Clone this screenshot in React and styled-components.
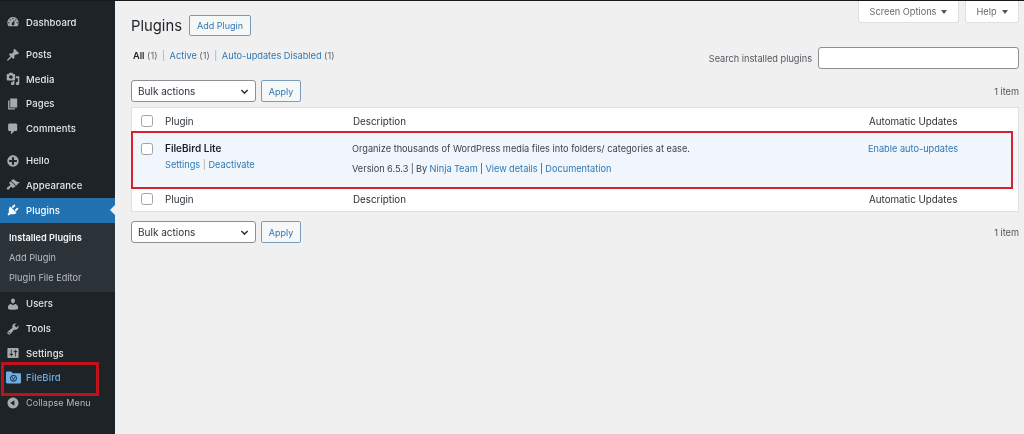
import React from "react";
import styled, { createGlobalStyle } from "styled-components";

const Global = createGlobalStyle`
  html, body { margin: 0; padding: 0; height: 100%; background: #f0f0f1; overflow: hidden; }
  body { font-family: Inter, "Liberation Sans", sans-serif; font-size: 9.5px; color: #3c434a; }
  * { box-sizing: border-box; }
`;

const Page = styled.div`
  position: relative; width: 1024px; height: 434px; display: flex; overflow: hidden;
  border-top: 1px solid #16181a; filter: blur(0.4px);
`;
const Sidebar = styled.nav`
  width: 115px; flex: none; background: #1d2327; padding-top: 9px;
  display: flex; flex-direction: column;
`;
const Item = styled.div`
  position: relative; height: 24.7px; margin-bottom: ${p => p.$mb || 0}px;
  display: flex; align-items: center; gap: 6px; padding-left: 6px;
  background: ${p => (p.$active ? "#2271b1" : "transparent")};
  color: ${p => (p.$active ? "#fff" : p.$color || "#e4e6e7")};
  font-size: ${p => p.$fs || 9.5}px; font-weight: ${p => p.$fw || 500}; letter-spacing: 0.1px;
  svg { width: 14px; height: 14px; flex: none; fill: ${p => (p.$active ? "#fff" : "#a7aaad")}; }
`;
const Notch = styled.span`
  position: absolute; right: 0; top: 50%; margin-top: -5px;
  border: 5px solid transparent; border-right-color: #f0f0f1; border-left-width: 0;
`;
const Submenu = styled.div`
  height: 69px; background: #2c3338; padding: 4.5px 0 0 9px;
  display: flex; flex-direction: column;
`;
const SubItem = styled.div`
  height: 20.2px; display: flex; align-items: center; font-size: 9.2px;
  color: ${p => (p.$current ? "#f3f4f5" : "#b9bec3")};
  font-weight: ${p => (p.$current ? 600 : 400)};
`;
const Main = styled.main`
  flex: 1; min-width: 0; padding: 0 5px 0 16px; display: flex; flex-direction: column;
`;
const ScreenTabs = styled.div`
  display: flex; justify-content: flex-end; gap: 6px; height: 22px;
`;
const ScreenTab = styled.div`
  width: ${p => p.$w}px; height: 22px; background: #fff;
  border: 1px solid #dfdfe0; border-top: none; border-radius: 0 0 3px 3px;
  display: flex; align-items: center; justify-content: center; gap: 5px;
  font-size: 9.2px; color: #646970;
`;
const Caret = styled.span`
  border: 3px solid transparent; border-top: 4px solid #50575e; border-bottom: none;
`;
const TitleRow = styled.div`
  display: flex; align-items: center; gap: 7px; margin-top: -9px; height: 23px;
`;
const Title = styled.h1`
  margin: 0; font-size: 14.8px; font-weight: 400; color: #1d2327;
`;
const OutlineButton = styled.div`
  width: ${p => p.$w}px; height: ${p => p.$h}px; background: #f6f7f7;
  border: 1px solid #7a9dbd; border-radius: 2px; color: #2f78b3; font-size: 9px;
  display: flex; align-items: center; justify-content: center;
`;
const FilterRow = styled.div`
  display: flex; justify-content: space-between; align-items: flex-start; height: 41px; margin-top: 2px;
`;
const Views = styled.div`
  margin-top: 11px; padding-left: 2px; font-size: 9.2px; color: #646970; display: flex; gap: 4.5px;
  b { font-weight: 600; color: #1d2327; }
  a { color: #2f78b3; }
  i { font-style: normal; color: #a7aaad; }
`;
const SearchBox = styled.div`
  display: flex; align-items: center; gap: 6px; margin-top: 8px; color: #50575e; font-size: 9.2px;
`;
const SearchInput = styled.div`
  width: 201px; height: 22px; background: #fff; border: 1px solid #8c8f94; border-radius: 3px;
`;
const NavRow = styled.div`
  display: flex; align-items: center; gap: 5px; height: 22px; margin-top: ${p => p.$mt || 0}px;
`;
const Select = styled.div`
  width: 125px; height: 22px; background: #fff; border: 1px solid #8c8f94; border-radius: 3px;
  display: flex; align-items: center; justify-content: space-between; padding: 0 6px;
  color: #2c3338; font-size: 10px;
  svg { width: 9px; height: 9px; stroke: #2c3338; stroke-width: 1.6; fill: none; }
`;
const Count = styled.span`
  margin-left: auto; font-size: 9.2px; color: #50575e;
`;
const Table = styled.div`
  margin-top: 5px; background: #fff; border: 1px solid #dfe0e2; height: 105px;
  display: flex; flex-direction: column;
`;
const Row = styled.div`
  display: grid; grid-template-columns: 33px 188px 516px 1fr; height: ${p => p.$h}px;
  padding-top: ${p => p.$pt || 0}px;
  align-items: ${p => (p.$body ? "start" : "center")};
  background: ${p => (p.$body ? "#f0f6fc" : "#fff")};
  font-size: 9.8px; color: #2c3338;
`;
const CheckCell = styled.div`
  display: flex; justify-content: center; padding-top: ${p => p.$pt || 0}px;
  padding-right: 3px;
`;
const Check = styled.span`
  width: 12px; height: 12px; background: #fff; border: 1px solid #a0a3a7; border-radius: 2.5px;
`;
const Name = styled.div`
  font-weight: 600; color: #1d2327; font-size: 10px; margin-top: 11px;
`;
const Actions = styled.div`
  margin-top: 5px; font-size: 9.2px; color: #a7aaad; a { color: #2f78b3; }
`;
const Desc = styled.div`
  margin: ${p => p.$mt}px 0 0 -1px; font-size: 9.2px; color: #3c434a; white-space: nowrap;
  word-spacing: ${p => p.$ws || 0}px;
  a { color: #2f78b3; }
`;
const Highlight = styled.div`
  position: absolute; left: ${p => p.$x}px; top: ${p => p.$y}px; width: ${p => p.$w}px; height: ${p => p.$h}px;
  border: ${p => p.$b}px solid ${p => p.$c}; pointer-events: none;
`;
const FolderSvg = styled.svg`
  && { width: 15px; height: 13px; margin: 0 -0.5px; fill: #72aee6; }
`;

const I = ({ d }) => <svg viewBox="0 0 20 20"><path d={d} /></svg>;
const icons = {
  dashboard: "M3.76 16h12.48c1.1-1.37 1.76-3.11 1.76-5 0-4.42-3.58-8-8-8s-8 3.58-8 8c0 1.89.66 3.63 1.76 5zM10 4c.55 0 1 .45 1 1s-.45 1-1 1-1-.45-1-1 .45-1 1-1zM6 6c.55 0 1 .45 1 1s-.45 1-1 1-1-.45-1-1 .45-1 1-1zm8 0c.55 0 1 .45 1 1s-.45 1-1 1-1-.45-1-1 .45-1 1-1zm-5.37 5.55L12 7v6c0 1.1-.9 2-2 2s-2-.9-2-2c0-.57.24-1.08.63-1.45zM4 10c.55 0 1 .45 1 1s-.45 1-1 1-1-.45-1-1 .45-1 1-1zm12 0c.55 0 1 .45 1 1s-.45 1-1 1-1-.45-1-1 .45-1 1-1z",
  posts: "M10.44 3.02l1.82-1.82 6.36 6.35-1.83 1.82c-1.05-.68-2.48-.57-3.41.36l-.75.75c-.92.93-1.04 2.35-.35 3.41l-1.83 1.82-2.41-2.41-2.8 2.79c-.42.42-3.38 2.71-3.8 2.29s1.86-3.39 2.28-3.81l2.79-2.79L4.1 9.36l1.83-1.82c1.05.69 2.48.57 3.4-.36l.75-.75c.93-.92 1.05-2.35.36-3.41z",
  media: "M13 11V4c0-.55-.45-1-1-1h-1.67L9 1H5L3.67 3H2c-.55 0-1 .45-1 1v7c0 .55.45 1 1 1h10c.55 0 1-.45 1-1zM7 4.5c1.38 0 2.5 1.12 2.5 2.5S8.38 9.5 7 9.5 4.5 8.38 4.5 7 5.62 4.5 7 4.5zM14 6h5v10.5c0 1.38-1.12 2.5-2.5 2.5S14 17.88 14 16.5s1.12-2.5 2.5-2.5c.17 0 .34.02.5.05V9h-3V6zm-4 8.05V13h2v3.5c0 1.38-1.12 2.5-2.5 2.5S7 17.88 7 16.5 8.12 14 9.5 14c.17 0 .34.02.5.05z",
  pages: "M6 15V2h10v13H6zm-1 1h8v2H3V5h2v11z",
  comments: "M5 2h9c1.1 0 2 .9 2 2v7c0 1.1-.9 2-2 2h-2l-5 5v-5H5c-1.1 0-2-.9-2-2V4c0-1.1.9-2 2-2z",
  hello: "M15.8 4.2c3.2 3.21 3.2 8.39 0 11.6-3.21 3.2-8.39 3.2-11.6 0C1 12.59 1 7.41 4.2 4.2 7.41 1 12.59 1 15.8 4.2zm-4.3 11.3v-4h4v-3h-4v-4h-3v4h-4v3h4v4h3z",
  appearance: "M14.48 11.06L7.41 3.99l1.5-1.5c.5-.56 2.3-.47 3.51.32 1.21.8 1.43 1.28 2.91 2.1 1.18.64 2.45 1.26 4.45.85zm-.71.71L6.7 4.7 4.93 6.47c-.39.39-.39 1.02 0 1.41l1.06 1.06c.39.39.39 1.03 0 1.42-.6.6-1.43 1.11-2.21 1.69-.35.26-.7.53-1.01.84C1.43 13.23.91 14.99 1.3 15.8c.4.8 1.74 1.59 2.96.37.3-.31.58-.66.84-1.01.58-.78 1.09-1.61 1.69-2.21.39-.39 1.03-.39 1.42 0l1.06 1.06c.39.39 1.02.39 1.41 0z",
  plugins: "M13.11 4.36L9.87 7.6 8 5.73l3.24-3.24c.35-.34 1.05-.2 1.56.32.52.51.66 1.21.31 1.55zm-8 1.77l.91-1.12 9.01 9.01-1.19.84c-.71.71-2.63 1.16-3.82 1.16H6.14L4.9 17.26c-.59.59-1.54.59-2.12 0-.59-.58-.59-1.53 0-2.12l1.24-1.24v-3.88c0-1.13.4-3.19 1.09-3.89zm7.26 3.97l3.24-3.24c.34-.35 1.04-.21 1.55.31.52.51.66 1.21.31 1.55l-3.24 3.25z",
  users: "M10 9.25c-2.27 0-2.73-3.44-2.73-3.44C7 4.02 7.82 2 9.97 2c2.16 0 2.98 2.02 2.71 3.81 0 0-.41 3.44-2.68 3.44zm0 2.57L12.72 10c2.39 0 4.52 2.33 4.52 4.53v2.49s-3.65 1.13-7.24 1.13c-3.65 0-7.24-1.13-7.24-1.13v-2.49c0-2.25 1.94-4.48 4.47-4.48z",
  tools: "M16.68 9.77c-1.34 1.34-3.3 1.67-4.95.99l-5.41 6.52c-.99.99-2.59.99-3.58 0s-.99-2.59 0-3.57l6.52-5.42c-.68-1.65-.35-3.61.99-4.95 1.28-1.28 3.12-1.62 4.72-1.06l-2.89 2.89 2.82 2.82 2.86-2.87c.53 1.58.18 3.39-1.08 4.65zM3.81 16.21c.4.39 1.04.39 1.43 0 .4-.4.4-1.04 0-1.43-.39-.4-1.03-.4-1.43 0-.39.39-.39 1.03 0 1.43z",
  settings: "M18 16V4c0-.55-.45-1-1-1H3c-.55 0-1 .45-1 1v12c0 .55.45 1 1 1h14c.55 0 1-.45 1-1zM8 11h1c.55 0 1 .45 1 1s-.45 1-1 1H8v1.5c0 .28-.22.5-.5.5s-.5-.22-.5-.5V13H6c-.55 0-1-.45-1-1s.45-1 1-1h1V5.5c0-.28.22-.5.5-.5s.5.22.5.5V11zm5-2h-1c-.55 0-1-.45-1-1s.45-1 1-1h1V5.5c0-.28.22-.5.5-.5s.5.22.5.5V7h1c.55 0 1 .45 1 1s-.45 1-1 1h-1v5.5c0 .28-.22.5-.5.5s-.5-.22-.5-.5V9z",
  collapse: "M10 2.16c4.33 0 7.84 3.51 7.84 7.84s-3.51 7.84-7.84 7.84S2.16 14.33 2.16 10 5.71 2.16 10 2.16zm2 11.72V6.12L6.18 9.97z",
};

const FolderIcon = () => (
  <FolderSvg viewBox="1 2.6 18 14.4">
    <path d="M1 4c0-.8.6-1.4 1.4-1.4h4.8L9 4.6h8.6c.8 0 1.4.6 1.4 1.4v9.6c0 .8-.6 1.4-1.4 1.4H2.4C1.6 17 1 16.4 1 15.6z" />
    <circle cx="10" cy="10.8" r="3.6" fill="none" stroke="#1d2327" strokeWidth="1.2" />
    <path d="M8.6 9l1.4 4 1.4-4" fill="none" stroke="#1d2327" strokeWidth="0.9" />
  </FolderSvg>
);

const Chevron = () => <svg viewBox="0 0 10 10"><path d="M1.5 3.2 5 6.8l3.5-3.6" /></svg>;

const Nav = ({ mt }) => (
  <NavRow $mt={mt}>
    <Select>Bulk actions<Chevron /></Select>
    <OutlineButton $w={40} $h={22}>Apply</OutlineButton>
    <Count>1 item</Count>
  </NavRow>
);

const HeadRow = ({ h, pt }) => (
  <Row $h={h} $pt={pt}>
    <CheckCell><Check /></CheckCell>
    <div>Plugin</div>
    <div>Description</div>
    <div>Automatic Updates</div>
  </Row>
);

export default function App() {
  return (
    <>
      <Global />
      <Page>
        <Sidebar>
          <Item $mb={7.5}><I d={icons.dashboard} />Dashboard</Item>
          <Item><I d={icons.posts} />Posts</Item>
          <Item><I d={icons.media} />Media</Item>
          <Item><I d={icons.pages} />Pages</Item>
          <Item $mb={7.5}><I d={icons.comments} />Comments</Item>
          <Item><I d={icons.hello} />Hello</Item>
          <Item><I d={icons.appearance} />Appearance</Item>
          <Item $active><I d={icons.plugins} />Plugins<Notch /></Item>
          <Submenu>
            <SubItem $current>Installed Plugins</SubItem>
            <SubItem>Add Plugin</SubItem>
            <SubItem>Plugin File Editor</SubItem>
          </Submenu>
          <Item><I d={icons.users} />Users</Item>
          <Item><I d={icons.tools} />Tools</Item>
          <Item><I d={icons.settings} />Settings</Item>
          <Item $color="#72aee6"><FolderIcon />FileBird</Item>
          <Item $color="#b4b9be" $fs={9} $fw={400}><I d={icons.collapse} />Collapse Menu</Item>
        </Sidebar>
        <Main>
          <ScreenTabs>
            <ScreenTab $w={101}>Screen Options <Caret /></ScreenTab>
            <ScreenTab $w={54}>Help <Caret /></ScreenTab>
          </ScreenTabs>
          <TitleRow>
            <Title>Plugins</Title>
            <OutlineButton $w={62} $h={21}>Add Plugin</OutlineButton>
          </TitleRow>
          <FilterRow>
            <Views>
              <span><b>All</b> (1)</span><i>|</i>
              <span><a>Active</a> (1)</span><i>|</i>
              <span><a>Auto-updates Disabled</a> (1)</span>
            </Views>
            <SearchBox>Search installed plugins<SearchInput /></SearchBox>
          </FilterRow>
          <Nav />
          <Table>
            <HeadRow h={23} pt={3} />
            <Row $h={56} $body>
              <CheckCell $pt={12}><Check /></CheckCell>
              <div>
                <Name>FileBird Lite</Name>
                <Actions><a>Settings</a> | <a>Deactivate</a></Actions>
              </div>
              <div>
                <Desc $mt={12}>Organize thousands of WordPress media files into folders/ categories at ease.</Desc>
                <Desc $mt={9} $ws={-0.25}>Version 6.5.3 | By <a>Ninja Team</a> | <a>View details</a> | <a>Documentation</a></Desc>
              </div>
              <Desc $mt={12}><a>Enable auto-updates</a></Desc>
            </Row>
            <HeadRow h={24} />
          </Table>
          <Nav mt={9} />
        </Main>
        <Highlight $x={131} $y={130} $w={882} $h={58} $b={2} $c="#d8232f" />
        <Highlight $x={1} $y={361} $w={98} $h={34} $b={3} $c="#c0121a" />
      </Page>
    </>
  );
}
